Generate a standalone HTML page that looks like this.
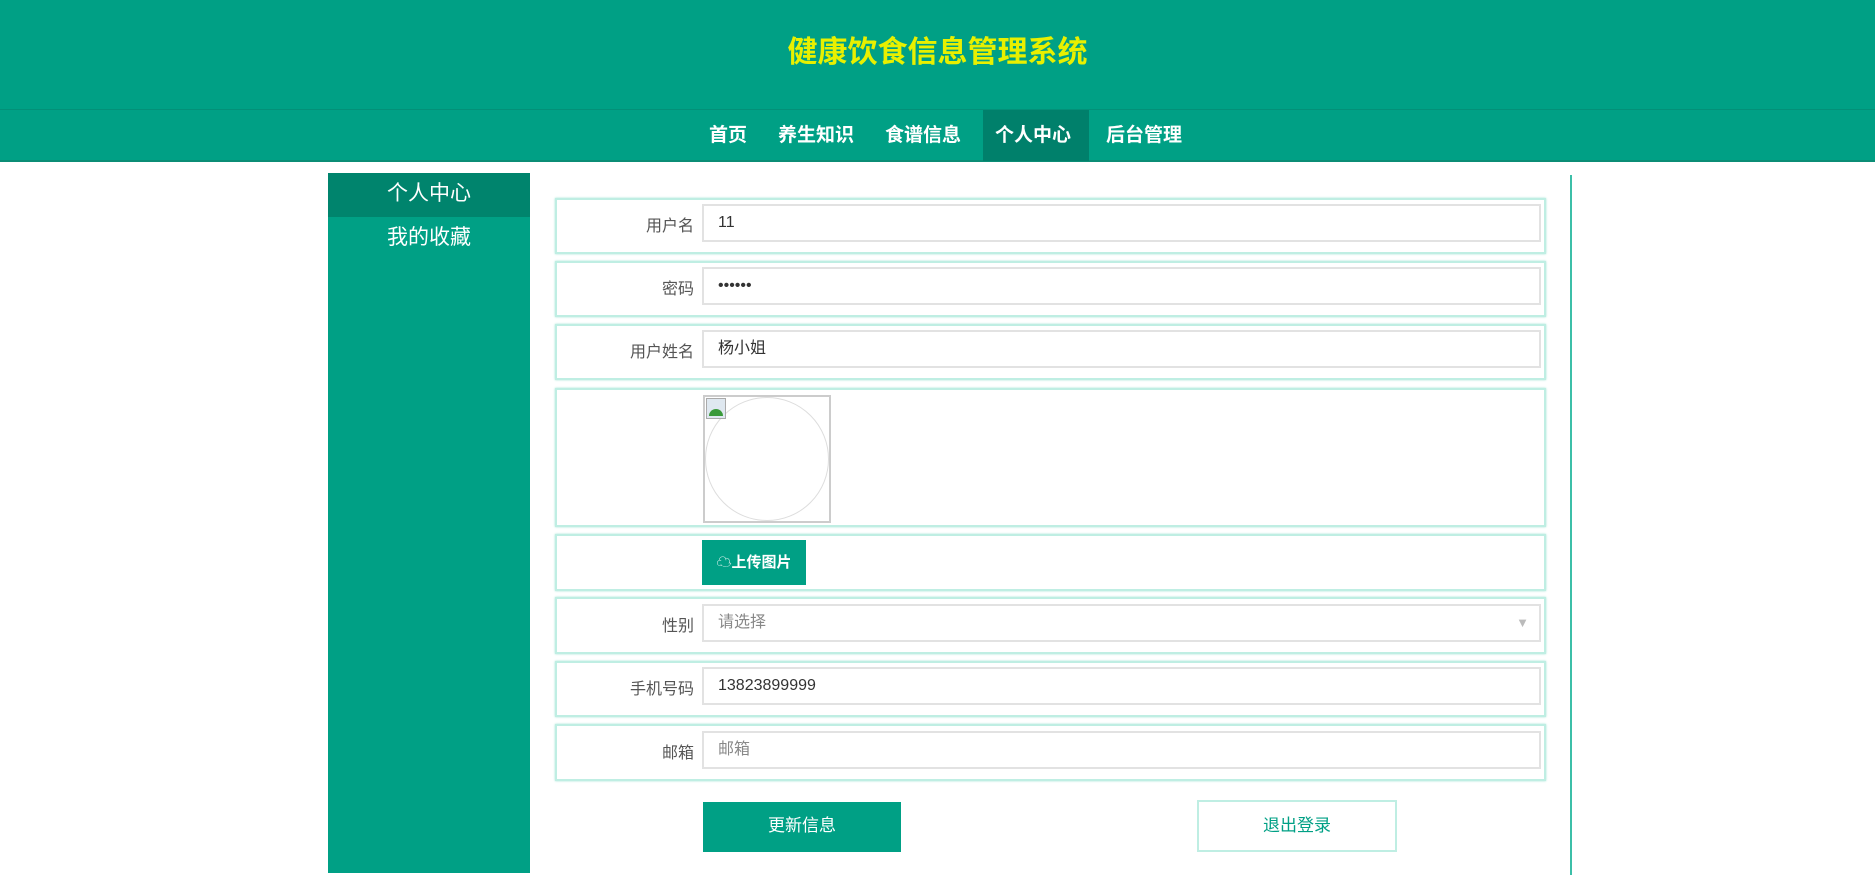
<!DOCTYPE html>
<html><head><meta charset="utf-8"><style>
*{margin:0;padding:0;box-sizing:border-box}
body{width:1875px;height:844px;overflow:hidden;background:#fff;font-family:"Liberation Sans","Noto Sans CJK SC",sans-serif;position:relative}
.hd{position:absolute;left:0;top:0;width:1875px;height:109px;background:#00a085}
.hd h1{position:absolute;left:0;right:0;top:27px;text-align:center;font-size:30px;color:#e8f000;font-weight:bold;letter-spacing:0}
.nav{position:absolute;left:0;top:109px;width:1875px;height:53px;background:#00a085;border-top:1px solid #039078;border-bottom:2px solid #0b8d76}
.nav span{position:absolute;top:0;height:51px;line-height:51px;color:#fff;font-size:19px;font-weight:bold}
.nav .act{background:#00806b;padding:0 12px}
.side{position:absolute;left:328px;top:173px;width:202px;height:700px;background:#00a085}
.side div{height:44px;line-height:42px;text-align:center;color:#fff;font-size:21px}
.side .a{background:#00846d}
.vl{position:absolute;left:1570px;top:175px;width:2px;height:700px;background:#3cbfa8}
.row{position:absolute;left:555px;width:991px;border:2px solid #bfeee3;box-shadow:0 0 2px #9fe3d3;background:#fff}
.row label{position:absolute;right:850px;color:#555;font-size:16px;white-space:nowrap}
.inp{position:absolute;left:145px;width:839px;height:38px;border:2px solid #e2e2e2;font-size:16px;color:#333;padding-left:14px;line-height:34px}
.btn{position:absolute;font-size:17px;text-align:center}
</style></head><body>
<div class="hd"><h1>健康饮食信息管理系统</h1></div>
<div class="nav">
<span style="left:709px">首页</span>
<span style="left:778px">养生知识</span>
<span style="left:885px">食谱信息</span>
<span class="act" style="left:983px;width:106px">个人中心</span>
<span style="left:1106px">后台管理</span>
</div>
<div class="side"><div class="a">个人中心</div><div>我的收藏</div></div>
<div class="vl"></div>

<div class="row" style="top:198px;height:56px"><label style="top:12px">用户名</label><div class="inp" style="top:4px">11</div></div>
<div class="row" style="top:261px;height:56px"><label style="top:12px">密码</label><div class="inp" style="top:4px">••••••</div></div>
<div class="row" style="top:324px;height:56px"><label style="top:12px">用户姓名</label><div class="inp" style="top:4px">杨小姐</div></div>
<div class="row" style="top:388px;height:139px">
<div style="position:absolute;left:146px;top:5px;width:128px;height:128px;border:2px solid #ccc"><div style="position:absolute;left:0;top:0;width:124px;height:124px;border-radius:50%;border:1px solid #ddd"></div><div style="position:absolute;left:1px;top:1px;width:20px;height:21px;background:#dfe8f0;border:1px solid #aaa"><div style="position:absolute;left:2px;bottom:2px;width:14px;height:7px;background:#3a9a3a;border-radius:7px 7px 0 0"></div></div></div>
</div>
<div class="row" style="top:534px;height:57px"><div class="btn" style="left:145px;top:4px;width:104px;height:45px;background:#00a085;color:#fff;line-height:45px;font-size:15px;font-weight:bold">☁上传图片</div></div>
<div class="row" style="top:597px;height:57px"><label style="top:13px">性别</label><div class="inp" style="top:5px;color:#888">请选择<span style="position:absolute;right:10px;top:0;color:#bbb;font-size:13px">▼</span></div></div>
<div class="row" style="top:661px;height:56px"><label style="top:12px">手机号码</label><div class="inp" style="top:4px">13823899999</div></div>
<div class="row" style="top:724px;height:57px"><label style="top:13px">邮箱</label><div class="inp" style="top:5px;color:#888">邮箱</div></div>

<div class="btn" style="left:703px;top:802px;width:198px;height:50px;background:#00a085;color:#fff;line-height:48px">更新信息</div>
<div class="btn" style="left:1197px;top:800px;width:200px;height:52px;background:#fff;border:2px solid #bfeee3;color:#00a085;line-height:48px">退出登录</div>
</body></html>
